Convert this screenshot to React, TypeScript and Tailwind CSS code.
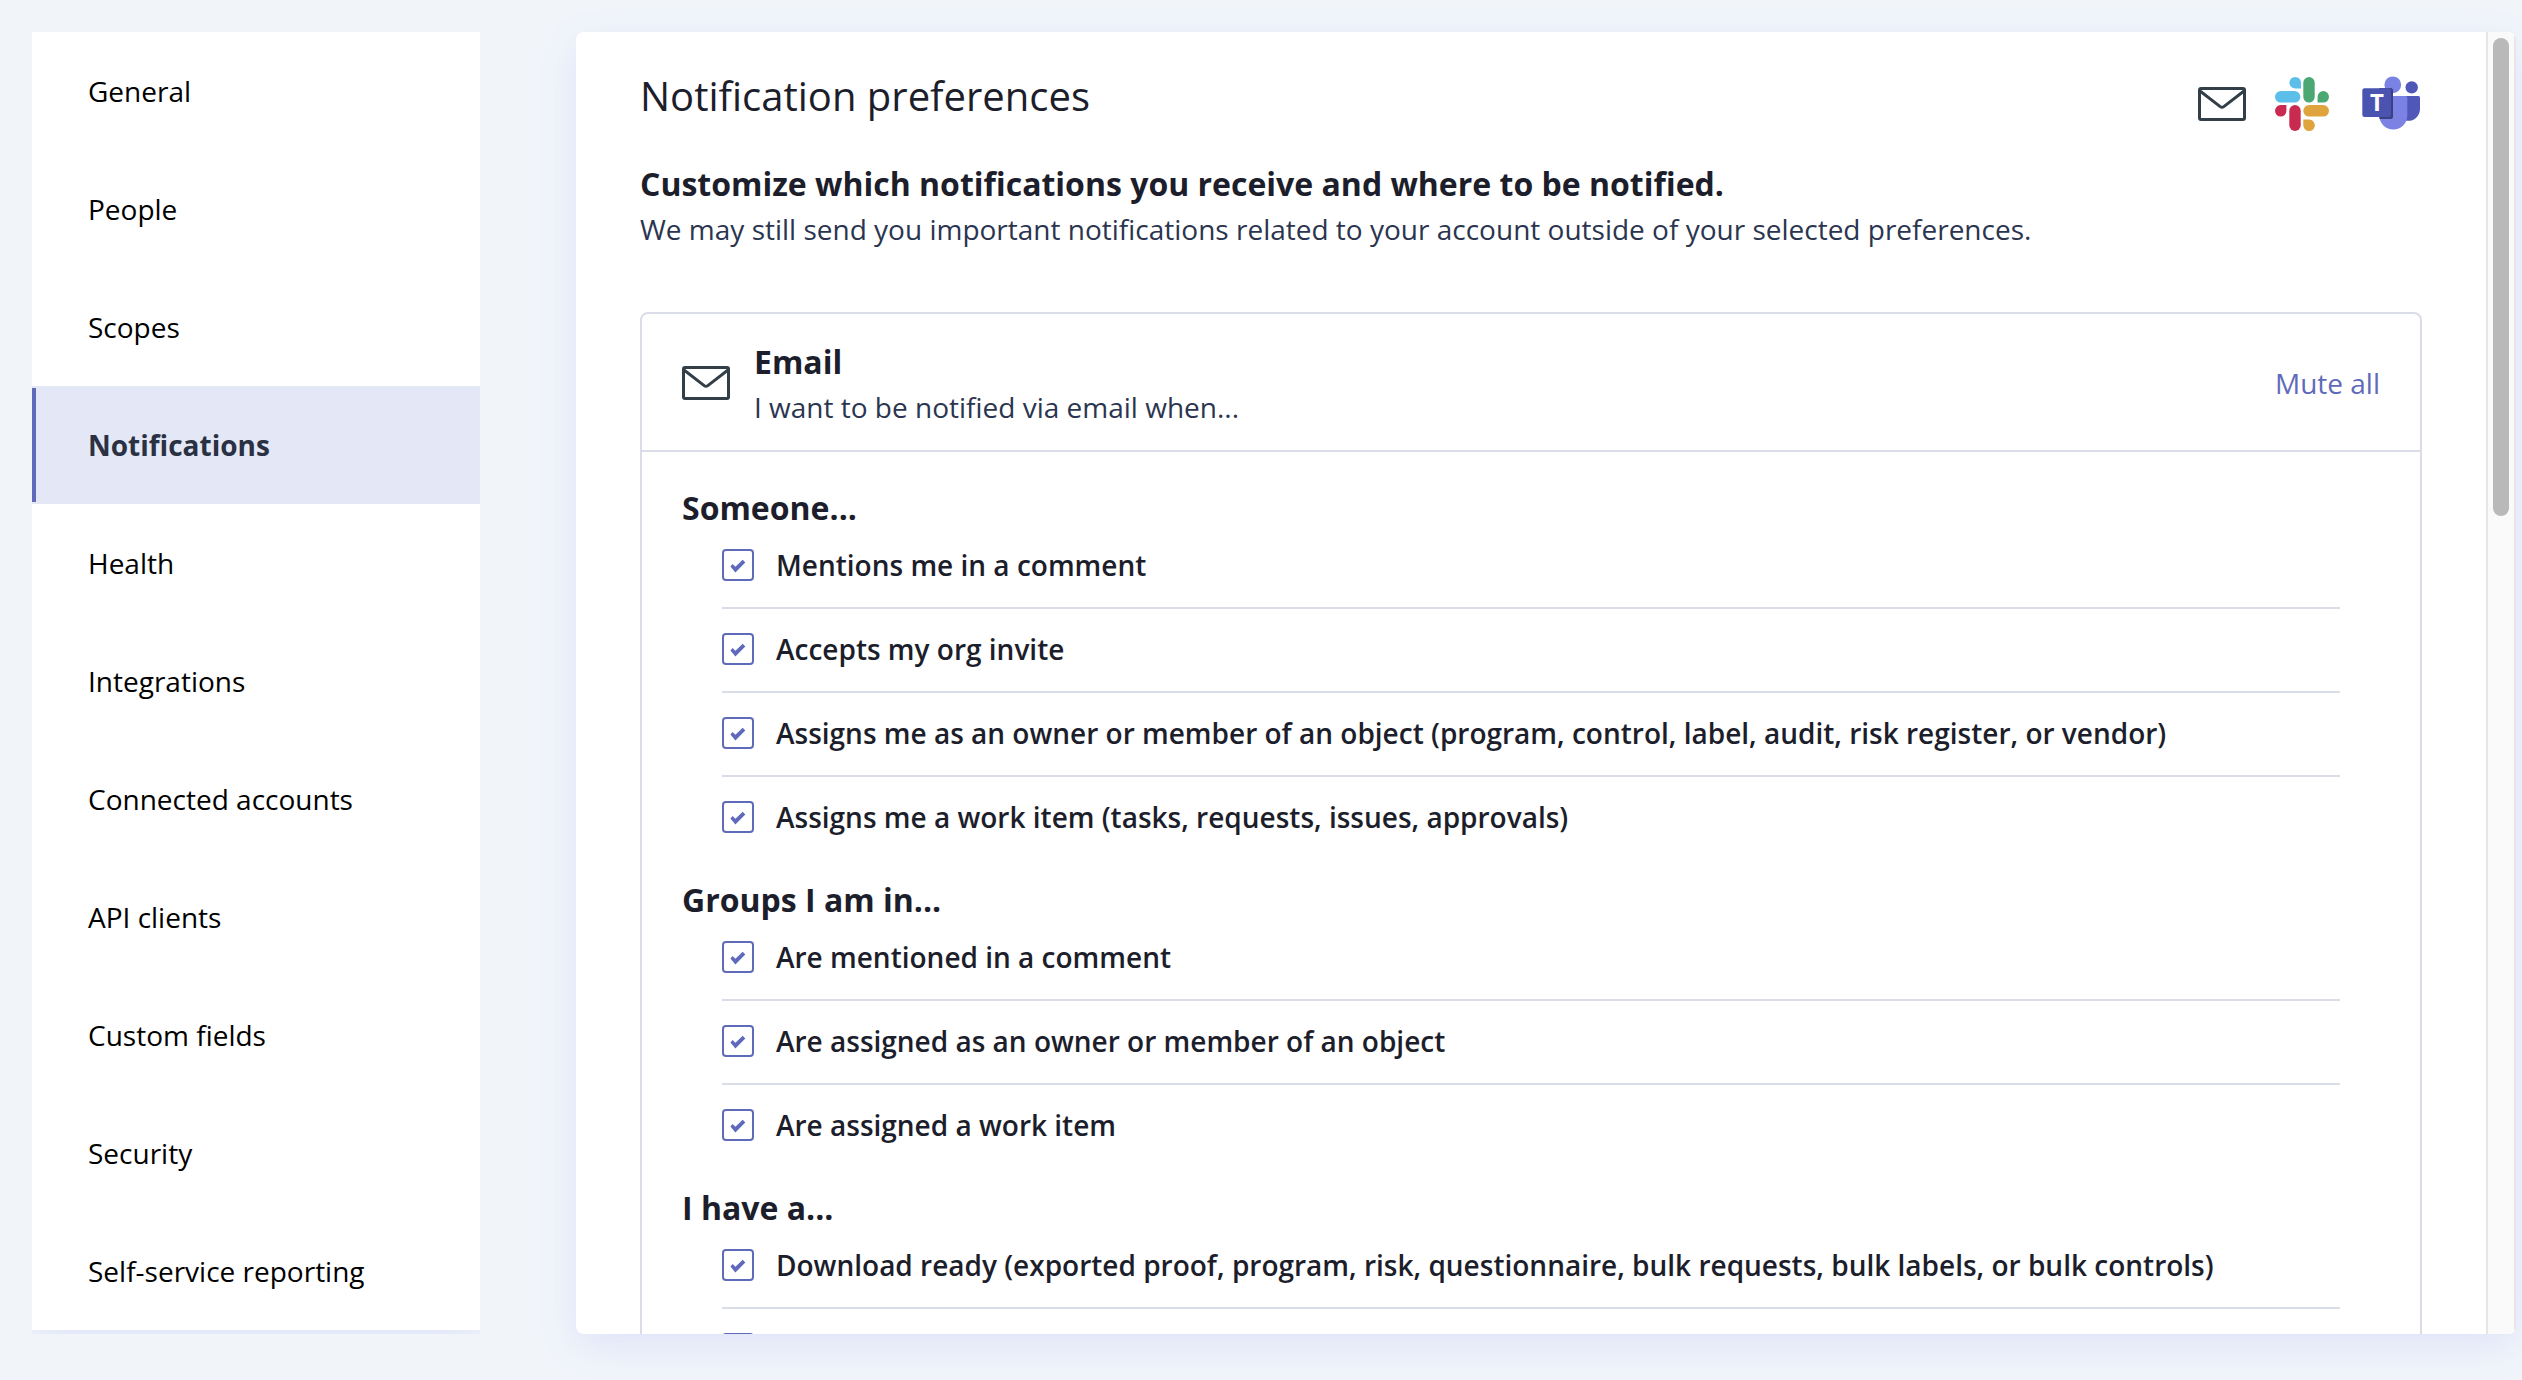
import { useState } from 'react';
import clsx from 'clsx';

const navItems = [
  'General',
  'People',
  'Scopes',
  'Notifications',
  'Health',
  'Integrations',
  'Connected accounts',
  'API clients',
  'Custom fields',
  'Security',
  'Self-service reporting',
];

const emailGroups = [
  {
    title: 'Someone...',
    options: [
      'Mentions me in a comment',
      'Accepts my org invite',
      'Assigns me as an owner or member of an object (program, control, label, audit, risk register, or vendor)',
      'Assigns me a work item (tasks, requests, issues, approvals)',
    ],
  },
  {
    title: 'Groups I am in...',
    options: [
      'Are mentioned in a comment',
      'Are assigned as an owner or member of an object',
      'Are assigned a work item',
    ],
  },
  {
    title: 'I have a...',
    options: [
      'Download ready (exported proof, program, risk, questionnaire, bulk requests, bulk labels, or bulk controls)',
      'Scheduled report ready',
    ],
  },
];

export default function App() {
  const [active, setActive] = useState('Notifications');

  return (
    <div className="flex h-screen gap-24 bg-[#f1f5fa] pt-8 pr-1.5 pb-[46px] pl-8 font-['Open_Sans',sans-serif] text-[28px] leading-[42px]">
      <Sidebar active={active} onSelect={setActive} />
      <main className="flex min-w-0 flex-1 overflow-hidden rounded-lg bg-white shadow-[0_12px_40px_rgba(93,107,240,0.12)]">
        <div className="min-w-0 flex-1 overflow-y-auto px-16 pt-9 [scrollbar-width:none]">
          <header className="flex items-start justify-between">
            <h1 className="text-[40px] leading-[56px] text-[#1c1e2b]">
              Notification preferences
            </h1>
            <div className="flex items-center gap-7 pt-2">
              <EnvelopeIcon />
              <SlackIcon />
              <TeamsIcon />
            </div>
          </header>
          <h2 className="mt-7 text-[32px] leading-[48px] font-bold text-[#1c1e2b]">
            Customize which notifications you receive and where to be notified.
          </h2>
          <p className="text-[#2b3550]">
            We may still send you important notifications related to your account
            outside of your selected preferences.
          </p>
          <EmailPreferences />
        </div>
        <div className="w-[30px] shrink-0 border-x-2 border-[#e6e6e6] bg-[#fafafa] px-[5px] pt-1.5">
          <div className="mx-auto h-[478px] w-4 rounded-full bg-[#b9b9b9]" />
        </div>
      </main>
    </div>
  );
}

function Sidebar({
  active,
  onSelect,
}: {
  active: string;
  onSelect: (item: string) => void;
}) {
  return (
    <div className="w-[448px] shrink-0 overflow-hidden">
      <nav className="bg-white shadow-[0_12px_40px_rgba(93,107,240,0.12)]">
        {navItems.map((item) => (
          <a
            key={item}
            href="#"
            aria-current={item === active ? 'page' : undefined}
            className={clsx(
              'relative flex h-[118px] items-center px-14',
              item === active
                ? 'bg-[#e4e7f6] font-bold text-[#2a3142] before:absolute before:inset-y-0.5 before:left-0 before:w-1 before:bg-[#5f6bba]'
                : 'text-black'
            )}
            onClick={(event) => {
              event.preventDefault();
              onSelect(item);
            }}
          >
            {item}
          </a>
        ))}
      </nav>
    </div>
  );
}

function EmailPreferences() {
  const [muted, setMuted] = useState<string[]>([]);

  function toggle(option: string) {
    setMuted((current) =>
      current.includes(option)
        ? current.filter((item) => item !== option)
        : [...current, option]
    );
  }

  return (
    <section className="mt-[62px] rounded-lg border-2 border-[#dadde8]">
      <div className="flex items-center gap-6 border-b-2 border-[#dadde8] px-10 pt-6 pb-[22px]">
        <EnvelopeIcon />
        <div className="flex-1">
          <h2 className="text-[32px] leading-[48px] font-bold text-[#1c1e2b]">
            Email
          </h2>
          <p className="text-[#2b3550]">I want to be notified via email when...</p>
        </div>
        <button
          className="text-[#5f6bba]"
          onClick={() => setMuted(emailGroups.flatMap((group) => group.options))}
          type="button"
        >
          Mute all
        </button>
      </div>
      <div className="flex flex-col gap-[38px] px-10 py-8">
        {emailGroups.map((group) => (
          <div key={group.title}>
            <h3 className="text-[32px] leading-[48px] font-bold text-[#1c1e2b]">
              {group.title}
            </h3>
            <ul className="px-10">
              {group.options.map((option) => (
                <li
                  key={option}
                  className="border-b-2 border-[#dadde8] pt-[19px] pb-[21px] first:pt-3 last:border-b-0 last:pb-0"
                >
                  <Checkbox
                    checked={!muted.includes(option)}
                    label={option}
                    onChange={() => toggle(option)}
                  />
                </li>
              ))}
            </ul>
          </div>
        ))}
      </div>
    </section>
  );
}

function Checkbox({
  checked,
  label,
  onChange,
}: {
  checked: boolean;
  label: string;
  onChange: () => void;
}) {
  return (
    <label className="flex items-center gap-[22px] font-semibold text-[#1c1e2b]">
      <span className="relative size-8 shrink-0">
        <input
          checked={checked}
          className="peer block size-8 appearance-none rounded-sm border-2 border-[#5f6bba] bg-white"
          onChange={onChange}
          type="checkbox"
        />
        <svg
          className="pointer-events-none absolute inset-0 hidden size-8 peer-checked:block"
          viewBox="0 0 32 32"
        >
          <path
            d="M8.4 17.6l2.3-2.5 2.7 2.6 7.3-7 2.6 2.7-9.9 10.2z"
            fill="#5f6bba"
          />
        </svg>
      </span>
      {label}
    </label>
  );
}

function EnvelopeIcon() {
  return (
    <svg
      aria-hidden="true"
      className="h-[34px] w-12 shrink-0"
      fill="none"
      stroke="#323f48"
      strokeWidth="3"
      viewBox="0 0 48 34"
    >
      <rect height="31" rx="1.5" width="45" x="1.5" y="1.5" />
      <path d="M2 4l20.2 15.6q1.8 1.3 3.6 0L46 4" />
    </svg>
  );
}

function SlackIcon() {
  return (
    <svg aria-hidden="true" className="size-14 shrink-0" viewBox="0 0 56 56">
      <g fill="#5bbfe9">
        <rect height="11.6" rx="5.8" width="25.4" x="1" y="15" />
        <path d="M27 12.5h-5.8A5.8 5.8 0 1 1 27 6.7z" />
      </g>
      <g fill="#4ba872">
        <rect height="25.6" rx="5.7" width="11.4" x="29.3" y="1" />
        <path d="M43.6 26.6v-5.8a5.7 5.8 0 1 1 5.7 5.8z" />
      </g>
      <g fill="#c92a50">
        <rect height="26" rx="5.7" width="11.4" x="15.3" y="29" />
        <path d="M12.4 29v5.8A5.7 5.8 0 1 1 6.7 29z" />
      </g>
      <g fill="#dfa43d">
        <rect height="11.6" rx="5.8" width="25.7" x="29.3" y="29" />
        <path d="M29.3 43.5h5.8a5.8 5.8 0 1 1-5.8 5.8z" />
      </g>
    </svg>
  );
}

function TeamsIcon() {
  return (
    <svg aria-hidden="true" className="h-14 w-16 shrink-0" viewBox="0 0 64 56">
      <circle cx="53.7" cy="11.4" fill="#4f58b9" r="6.2" />
      <path d="M47 20h13.5q1.5 0 1.5 1.5V33a11.8 11.8 0 0 1-15 11.4z" fill="#4f58b9" />
      <circle cx="34.8" cy="8.8" fill="#7a83e4" r="8.4" />
      <path
        d="M21.3 20h26.5q1.5 0 1.5 1.5v18a14 14 0 0 1-28 0z"
        fill="#7a83e4"
      />
      <path d="M21.3 12h11.2a2.5 2.5 0 0 1 2.5 2.5v26a2.5 2.5 0 0 1-2.5 2.5H21.6a12 12 0 0 1-.3-3z" fill="#3b4080" />
      <rect fill="#4a53b0" height="28.8" rx="2.2" width="28.8" x="4.3" y="12.2" />
      <text
        fill="#fff"
        fontFamily="Open Sans, sans-serif"
        fontSize="24"
        fontWeight="700"
        textAnchor="middle"
        x="19"
        y="35.4"
      >
        T
      </text>
    </svg>
  );
}
